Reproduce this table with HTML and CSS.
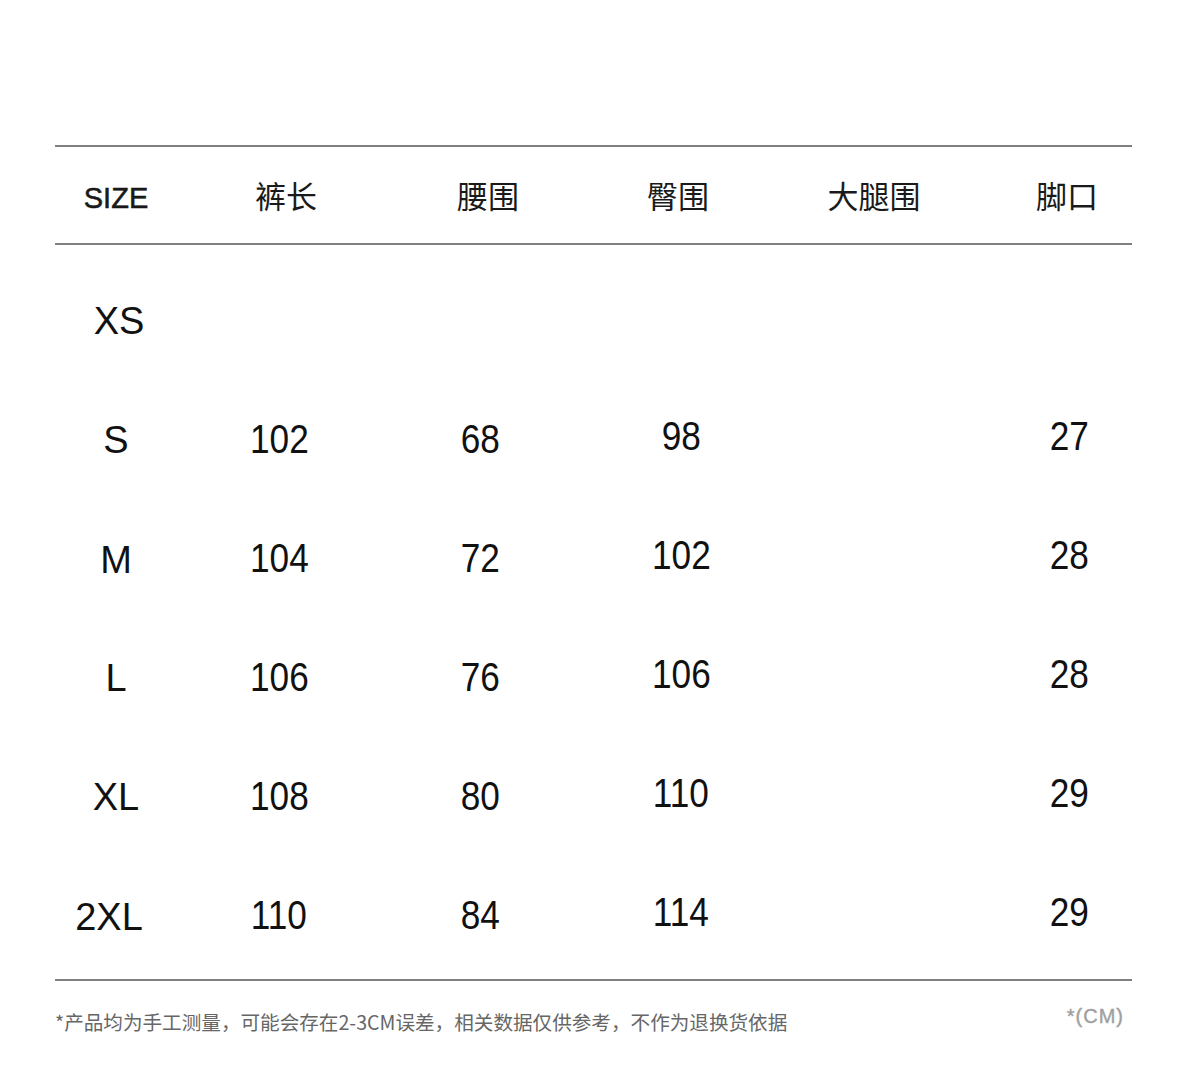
FILE: index.html
```html
<!DOCTYPE html>
<html lang="zh-CN">
<head>
<meta charset="utf-8">
<title>尺码表</title>
<link rel="stylesheet" href="styles.css">
</head>
<body>
<div class="page">
  <div class="table">
    <div class="head">
      <div class="hc c1"><span class="en">SIZE</span></div>
      <div class="hc c2">裤长</div>
      <div class="hc c3">腰围</div>
      <div class="hc c4">臀围</div>
      <div class="hc c5">大腿围</div>
      <div class="hc c6">脚口</div>
    </div>
    <div class="body">
      <div class="row">
        <div class="cell size shift">XS</div>
        <div class="cell"></div>
        <div class="cell"></div>
        <div class="cell up"></div>
        <div class="cell"></div>
        <div class="cell up"></div>
      </div>
      <div class="row">
        <div class="cell size">S</div>
        <div class="cell"><span class="num">102</span></div>
        <div class="cell"><span class="num">68</span></div>
        <div class="cell up"><span class="num">98</span></div>
        <div class="cell"></div>
        <div class="cell up"><span class="num">27</span></div>
      </div>
      <div class="row">
        <div class="cell size down">M</div>
        <div class="cell"><span class="num">104</span></div>
        <div class="cell"><span class="num">72</span></div>
        <div class="cell up"><span class="num">102</span></div>
        <div class="cell"></div>
        <div class="cell up"><span class="num">28</span></div>
      </div>
      <div class="row">
        <div class="cell size">L</div>
        <div class="cell"><span class="num">106</span></div>
        <div class="cell"><span class="num">76</span></div>
        <div class="cell up"><span class="num">106</span></div>
        <div class="cell"></div>
        <div class="cell up"><span class="num">28</span></div>
      </div>
      <div class="row">
        <div class="cell size">XL</div>
        <div class="cell"><span class="num">108</span></div>
        <div class="cell"><span class="num">80</span></div>
        <div class="cell up"><span class="num">110</span></div>
        <div class="cell"></div>
        <div class="cell up"><span class="num">29</span></div>
      </div>
      <div class="row">
        <div class="cell size wide">2XL</div>
        <div class="cell"><span class="num">110</span></div>
        <div class="cell"><span class="num">84</span></div>
        <div class="cell up"><span class="num">114</span></div>
        <div class="cell"></div>
        <div class="cell up"><span class="num">29</span></div>
      </div>
    </div>
  </div>
  <div class="foot">
    <p class="note">*产品均为手工测量，可能会存在2-3CM误差，相关数据仅供参考，不作为退换货依据</p>
    <p class="unit">*(CM)</p>
  </div>
</div>
</body>
</html>
```

FILE: styles.css
```css
html, body {
  margin: 0;
  padding: 0;
  background: #ffffff;
}

body {
  font-family: "Liberation Sans", Arial, "Noto Sans CJK SC", sans-serif;
  color: #111111;
}

.page {
  width: 1077px;
  margin: 0 0 0 55px;
  padding-top: 145px;
  height: 921px;
}

.table {
  border-top: 2px solid #808080;
  border-bottom: 2px solid #808080;
}

.head,
.row {
  display: grid;
  grid-template-columns: 122px 204px 198px 204px 223px 126px;
}

.head {
  height: 96px;
  border-bottom: 2px solid #808080;
  align-items: center;
}

.hc {
  text-align: center;
  font-family: "Noto Sans CJK SC", "Liberation Sans", sans-serif;
  font-size: 31px;
  line-height: 40px;
  color: #1a1a1a;
}

.hc .en {
  font-family: "Liberation Sans", Arial, sans-serif;
  font-size: 29px;
  -webkit-text-stroke: 0.5px #111111;
  position: relative;
  top: 1px;
}

.hc.c2 { padding-left: 14px; }
.hc.c3 { padding-left: 16px; }
.hc.c4 { padding-right: 6px; }
.hc.c5 { padding-right: 41px; }
.hc.c6 { padding-right: 4px; }

.body {
  padding: 16px 0 4px;
}

.row {
  height: 119px;
  align-items: center;
}

.cell {
  text-align: center;
  font-size: 38px;
  line-height: 44px;
}

.cell.up {
  padding-bottom: 6px;
}

.cell.size {
  font-size: 38px;
}

.cell.size.shift {
  padding-left: 6px;
}

.cell.size.down {
  padding-top: 3px;
}

.cell.size.wide {
  padding-right: 14px;
  padding-top: 2px;
}

.num {
  display: inline-block;
  font-size: 40px;
  transform: scaleX(0.88);
}

.foot {
  display: flex;
  justify-content: space-between;
  align-items: flex-start;
  padding-right: 8px;
}

.note {
  margin: 29px 0 0;
  font-family: "Noto Sans CJK SC", sans-serif;
  font-size: 19.6px;
  line-height: 24px;
  color: #666666;
}

.unit {
  margin: 24px 0 0;
  font-family: "Liberation Sans", Arial, sans-serif;
  font-size: 20px;
  letter-spacing: 1px;
  -webkit-text-stroke: 0.4px #a0a0a0;
  line-height: 22px;
  color: #a0a0a0;
}
```
